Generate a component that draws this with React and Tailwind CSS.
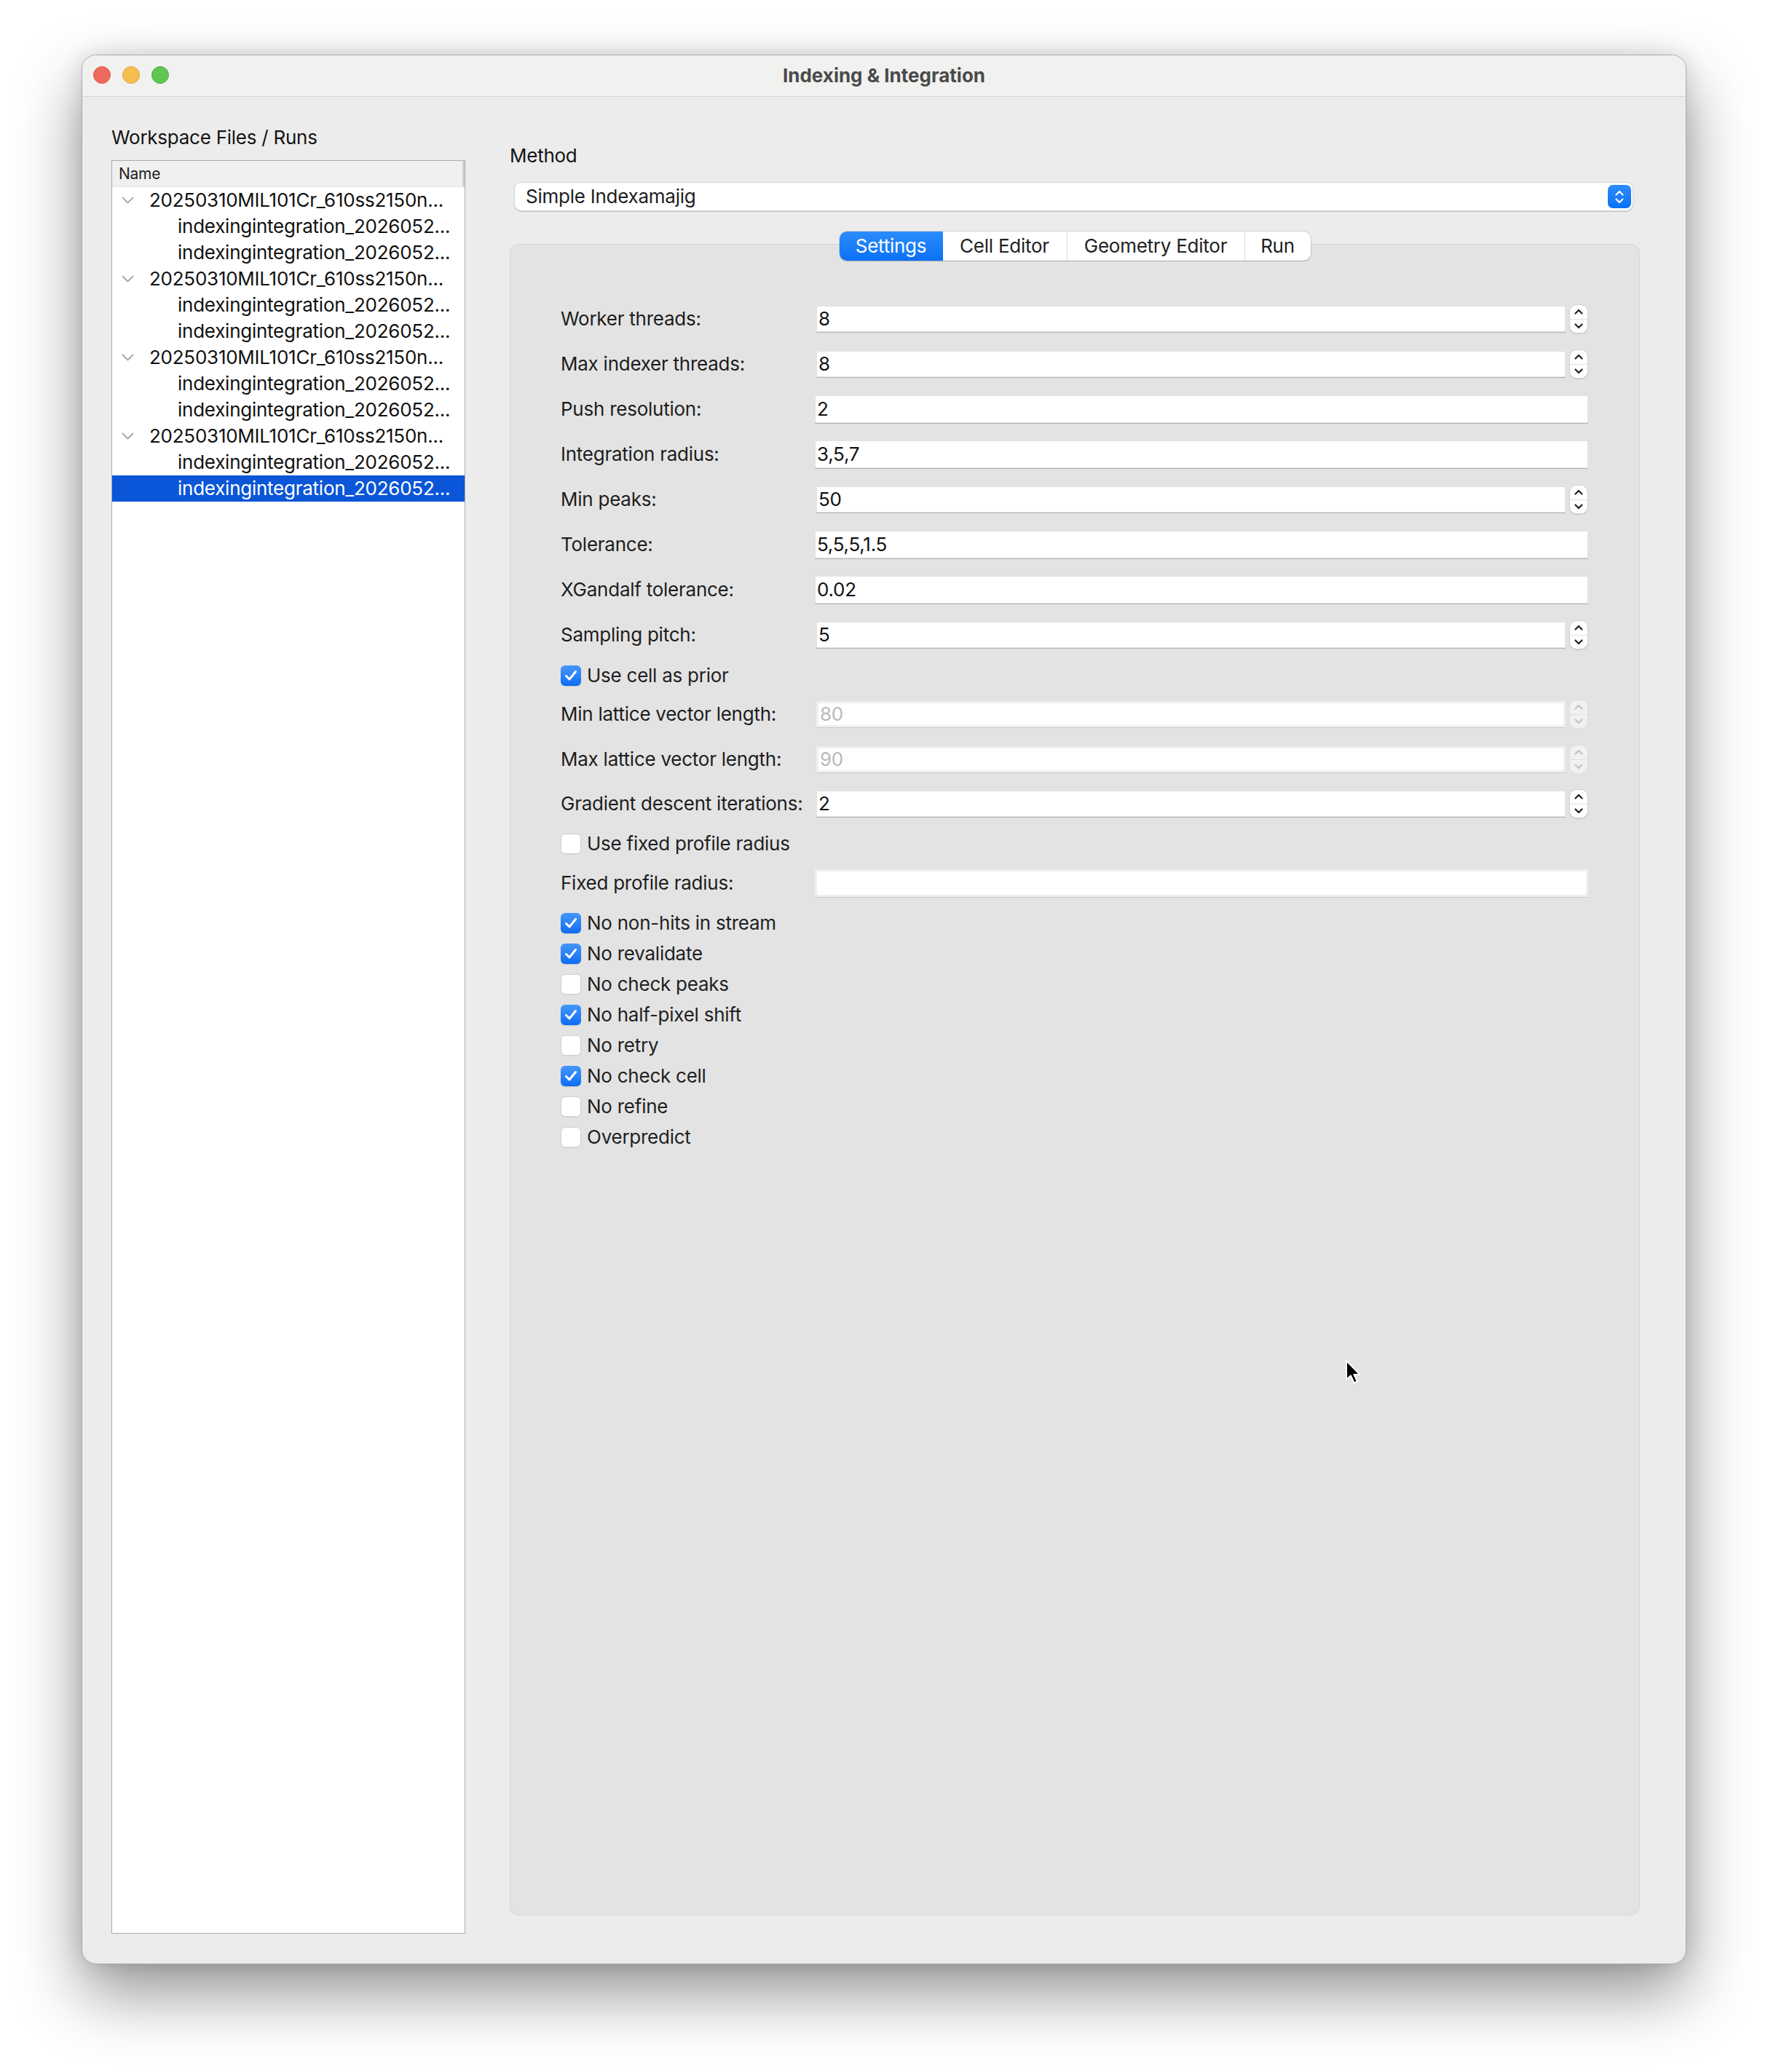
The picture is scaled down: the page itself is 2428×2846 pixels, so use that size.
import React from 'react';

const runGroups = [
  { name: '20250310MIL101Cr_610ss2150n...', runs: ['indexingintegration_2026052...', 'indexingintegration_2026052...'] },
  { name: '20250310MIL101Cr_610ss2150n...', runs: ['indexingintegration_2026052...', 'indexingintegration_2026052...'] },
  { name: '20250310MIL101Cr_610ss2150n...', runs: ['indexingintegration_2026052...', 'indexingintegration_2026052...'] },
  { name: '20250310MIL101Cr_610ss2150n...', runs: ['indexingintegration_2026052...', 'indexingintegration_2026052...'] },
];

// form rows, top to bottom; mt is the space above each row
const formRows = [
  { kind: 'spin', label: 'Worker threads:', value: '8', mt: 'mt-0' },
  { kind: 'spin', label: 'Max indexer threads:', value: '8', mt: 'mt-[22px]' },
  { kind: 'line', label: 'Push resolution:', value: '2', mt: 'mt-[22px]' },
  { kind: 'line', label: 'Integration radius:', value: '3,5,7', mt: 'mt-[22px]' },
  { kind: 'spin', label: 'Min peaks:', value: '50', mt: 'mt-[22px]' },
  { kind: 'line', label: 'Tolerance:', value: '5,5,5,1.5', mt: 'mt-[22px]' },
  { kind: 'line', label: 'XGandalf tolerance:', value: '0.02', mt: 'mt-[22px]' },
  { kind: 'spin', label: 'Sampling pitch:', value: '5', mt: 'mt-[22px]' },
  { kind: 'check', label: 'Use cell as prior', checked: true, mt: 'mt-[22px]' },
  { kind: 'spin', label: 'Min lattice vector length:', value: '80', disabled: true, mt: 'mt-[19px]' },
  { kind: 'spin', label: 'Max lattice vector length:', value: '90', disabled: true, mt: 'mt-[22px]' },
  { kind: 'spin', label: 'Gradient descent iterations:', value: '2', mt: 'mt-[21px]' },
  { kind: 'check', label: 'Use fixed profile radius', checked: false, mt: 'mt-[21px]' },
  { kind: 'line', label: 'Fixed profile radius:', value: '', disabled: true, mt: 'mt-[20px]' },
];

const flags = [
  { label: 'No non-hits in stream', checked: true },
  { label: 'No revalidate', checked: true },
  { label: 'No check peaks', checked: false },
  { label: 'No half-pixel shift', checked: true },
  { label: 'No retry', checked: false },
  { label: 'No check cell', checked: true },
  { label: 'No refine', checked: false },
  { label: 'Overpredict', checked: false },
];

const tabs = [
  { label: 'Settings', w: 'w-[142px]', active: true },
  { label: 'Cell Editor', w: 'w-[170px]' },
  { label: 'Geometry Editor', w: 'w-[244px]' },
  { label: 'Run', w: 'w-[91px]' },
];

function Chevron({ up, color }) {
  return (
    <svg width="12" height="8" viewBox="0 0 12 8">
      <path
        d={up ? 'M1.5 6.5 L6 2 L10.5 6.5' : 'M1.5 1.5 L6 6 L10.5 1.5'}
        stroke={color}
        strokeWidth="2.2"
        fill="none"
        strokeLinecap="round"
        strokeLinejoin="round"
      />
    </svg>
  );
}

function Stepper({ disabled }) {
  const c = disabled ? '#c2c2c2' : '#222222';
  return (
    <div
      className={
        disabled
          ? 'ml-[5px] flex h-[40px] w-[26px] flex-col overflow-hidden rounded-[10px] border border-[#dedede] bg-[#f1f1f1]'
          : 'ml-[5px] flex h-[40px] w-[26px] flex-col overflow-hidden rounded-[10px] border border-[#d2d2d2] bg-white shadow-[0_1px_1px_rgba(0,0,0,0.12)]'
      }
    >
      <div className="flex flex-1 items-center justify-center border-b border-[#e0e0e0]">
        <Chevron up color={c} />
      </div>
      <div className="flex flex-1 items-center justify-center">
        <Chevron color={c} />
      </div>
    </div>
  );
}

function Check({ checked, label }) {
  return (
    <div className="flex h-[28px] items-center">
      {checked ? (
        <div className="flex h-[28px] w-[28px] items-center justify-center rounded-[6px] bg-gradient-to-b from-[#4497f9] to-[#0a6cf4] shadow-[0_1px_1px_rgba(0,0,0,0.15)]">
          <svg width="18" height="16" viewBox="0 0 18 16">
            <path d="M2.5 8.5 L7 13 L15.5 2.5" stroke="#ffffff" strokeWidth="3" fill="none" strokeLinecap="round" strokeLinejoin="round" />
          </svg>
        </div>
      ) : (
        <div className="h-[28px] w-[28px] rounded-[6px] border border-[#d0d0d0] bg-white shadow-[0_1px_1px_rgba(0,0,0,0.06)]" />
      )}
      <span className="ml-[8px] text-[26px] leading-none text-[#1f1f1f]">{label}</span>
    </div>
  );
}

function FieldRow({ row }) {
  if (row.kind === 'check') {
    return (
      <div className={row.mt}>
        <Check checked={row.checked} label={row.label} />
      </div>
    );
  }
  const text = row.disabled ? 'text-[#b9b9b9]' : 'text-[#111111]';
  const box = row.disabled
    ? 'border-[3px] border-[#efefef] shadow-[0_1px_0_#c9c9c9]'
    : 'border border-[#e2e2e2] shadow-[0_1px_0_#b3b3b3]';
  return (
    <div className={`flex h-[40px] items-center ${row.mt}`}>
      <div className="w-[349px] text-[26px] leading-none text-[#1d1d1d]">{row.label}</div>
      {row.kind === 'spin' ? (
        <>
          <div className={`ml-[2px] flex h-[36px] flex-1 items-center bg-white pl-[2px] text-[26px] leading-none ${box} ${text}`}>
            {row.value}
          </div>
          <Stepper disabled={row.disabled} />
        </>
      ) : (
        <div className={`flex h-[38px] flex-1 items-center bg-white pl-[2px] text-[26px] leading-none ${box} ${text}`}>
          {row.value}
        </div>
      )}
    </div>
  );
}

function TreeChevron() {
  return (
    <svg width="17" height="10" viewBox="0 0 17 10">
      <path d="M1.5 1.5 L8.5 8.5 L15.5 1.5" stroke="#a6a6a6" strokeWidth="1.8" fill="none" strokeLinecap="round" strokeLinejoin="round" />
    </svg>
  );
}

function RunTree() {
  const rows = [];
  runGroups.forEach((g, gi) => {
    rows.push({ key: `g${gi}`, text: g.name, parent: true });
    g.runs.forEach((r, ri) => {
      rows.push({ key: `g${gi}r${ri}`, text: r, selected: gi === runGroups.length - 1 && ri === g.runs.length - 1 });
    });
  });

  return (
    <div className="mt-[15px] flex flex-1 flex-col border border-[#acacac] bg-white">
      <div className="flex h-[36px] shrink-0 items-center border-b border-[#e4e4e4] border-r-[3px] border-r-[#cfcfcf] bg-[#f0f0f0] pl-[9px] text-[21px] leading-none text-[#222222]">
        Name
      </div>
      {rows.map(row => (
        <div
          key={row.key}
          className={row.selected ? 'flex h-[36px] items-center bg-[#0b56d8] text-white' : 'flex h-[36px] items-center text-[#111111]'}
        >
          {row.parent ? (
            <>
              <div className="ml-[13px] flex w-[17px] justify-center">
                <TreeChevron />
              </div>
              <span className="ml-[21px] whitespace-nowrap text-[26px] leading-none">{row.text}</span>
            </>
          ) : (
            <span className="ml-[90px] whitespace-nowrap text-[26px] leading-none">{row.text}</span>
          )}
        </div>
      ))}
    </div>
  );
}

export default function App() {
  return (
    <div className="relative h-[2846px] w-[2428px] overflow-hidden bg-white pl-[112px] pt-[75px] font-[Inter,'Liberation_Sans',sans-serif] tracking-[-0.25px]">
      {/* window */}
      <div className="flex h-[2623px] w-[2204px] flex-col overflow-hidden rounded-[20px] border border-[#a9a9a9] bg-[#ececec] shadow-[0_40px_90px_rgba(0,0,0,0.42),0_0_30px_rgba(0,0,0,0.12)]">
        {/* title bar */}
        <div className="relative flex h-[57px] shrink-0 items-center justify-center border-b border-[#d5d5d5] bg-[#f1f1f0]">
          <div className="absolute left-[15px] top-[15px] flex gap-[16px]">
            <div className="h-[24px] w-[24px] rounded-full border border-[#dc5347] bg-[#ee6a5e]" />
            <div className="h-[24px] w-[24px] rounded-full border border-[#dba23a] bg-[#f5bf4f]" />
            <div className="h-[24px] w-[24px] rounded-full border border-[#4ea93f] bg-[#61c554]" />
          </div>
          <span className="text-[26px] font-bold leading-none tracking-normal text-[#4a4a4a]">Indexing &amp; Integration</span>
        </div>

        {/* body */}
        <div className="flex flex-1 pl-[40px] pr-[63px]">
          {/* left column */}
          <div className="flex w-[486px] flex-col pb-[41px] pt-[40px]">
            <div className="h-[32px] text-[26px] leading-[32px] text-[#141414]">Workspace Files / Runs</div>
            <RunTree />
          </div>

          {/* right column */}
          <div className="ml-[61px] flex flex-1 flex-col pb-[66px] pt-[65px]">
            <div className="h-[32px] text-[26px] leading-[32px] text-[#141414]">Method</div>
            <div className="ml-[6px] mr-[9px] mt-[20px] flex h-[40px] items-center justify-between rounded-[10px] border border-[#d6d6d6] bg-white pl-[15px] pr-[2px] shadow-[0_1px_1px_rgba(0,0,0,0.18)]">
              <span className="text-[26px] leading-none text-[#1d1d1d]">Simple Indexamajig</span>
              <div className="flex h-[32px] w-[32px] flex-col items-center justify-center gap-[3px] rounded-[7px] bg-gradient-to-b from-[#2b8dfb] to-[#0a70f5]">
                <Chevron up color="#ffffff" />
                <Chevron color="#ffffff" />
              </div>
            </div>

            <div className="relative z-10 mt-[28px] flex h-[40px] self-center overflow-hidden rounded-[10px] bg-white shadow-[0_0_0_1px_rgba(0,0,0,0.1),0_1px_1px_rgba(0,0,0,0.18)]">
              {tabs.map((t, i) => (
                <div
                  key={t.label}
                  className={
                    t.active
                      ? `flex ${t.w} items-center justify-center bg-gradient-to-b from-[#2b8dfb] to-[#0a70f5] text-[26px] leading-none text-white`
                      : `flex ${t.w} items-center justify-center text-[26px] leading-none text-[#222222] ${i > 1 ? 'border-l border-[#dcdcdc]' : ''}`
                  }
                >
                  {t.label}
                </div>
              ))}
            </div>

            <div className="-mt-[23px] flex flex-1 flex-col rounded-[12px] border border-[#d7d7d7] bg-[#e3e3e3] pl-[69px] pr-[70px] pt-[82px]">
              {formRows.map(row => (
                <FieldRow key={row.label} row={row} />
              ))}
              <div className="mt-[21px] flex flex-col gap-[14px]">
                {flags.map(f => (
                  <Check key={f.label} checked={f.checked} label={f.label} />
                ))}
              </div>
            </div>
          </div>
        </div>
      </div>

      {/* mouse pointer */}
      <svg className="absolute left-[1847px] top-[1867px]" width="24" height="36" viewBox="0 0 24 36">
        <path d="M2 2 L2 28 L8 22.5 L12.5 32.5 L17 30.5 L12.5 21 L20.5 21 Z" fill="#000000" stroke="#ffffff" strokeWidth="2" strokeLinejoin="round" />
      </svg>
    </div>
  );
}
